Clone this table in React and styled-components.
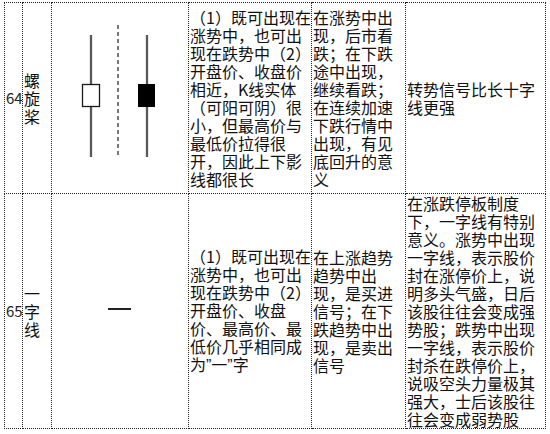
import React from "react";
import styled, { createGlobalStyle } from "styled-components";

const GlobalStyle = createGlobalStyle`
  html, body {
    margin: 0;
    padding: 0;
    background: #ffffff;
  }
  body {
    font-family: "Noto Sans CJK SC", "Noto Sans", sans-serif;
    color: #111;
  }
`;

const Page = styled.div`
  padding: 2px 0 0 4px;
  width: 550px;
  height: 434px;
  box-sizing: border-box;
`;

const Table = styled.table`
  border-collapse: collapse;
  table-layout: fixed;
  width: 541px;
  font-size: 16px;
  line-height: 18px;
`;

const Row = styled.tr`
  height: ${(p) => p.$h}px;
`;

const Cell = styled.td`
  border: 1px dotted #222;
  padding: 0;
  vertical-align: middle;
  overflow: visible;
`;

const NumCell = styled(Cell)`
  font-size: 15px;
  padding-left: 1px;
  color: #222;
`;

const NameCell = styled(Cell)`
  padding-left: 1px;
  word-break: break-all;
`;

const ChartCell = styled(Cell)`
  text-align: center;
`;

const TextCell = styled(Cell)`
  padding-left: 1px;
`;

const Line = styled.div`
  white-space: nowrap;
`;

// 中文引号按半角宽度显示
const Quote = styled.span`
  font-family: "Liberation Sans", sans-serif;
`;

const ChartSvg = styled.svg`
  display: block;
  margin: 0 auto;
`;

const FlatLine = styled.div`
  width: 23px;
  height: 2px;
  background: #222;
  margin: 0 auto;
  position: relative;
  left: -1px;
  top: -2px;
`;

const rows = [
  {
    no: "64",
    name: "螺旋桨",
    chart: "spin",
    height: 191,
    feature: [
      "（1）既可出现在",
      "涨势中，也可出",
      "现在跌势中（2）",
      "开盘价、收盘价",
      "相近，K线实体",
      "（可阳可阴）很",
      "小，但最高价与",
      "最低价拉得很",
      "开，因此上下影",
      "线都很长",
    ],
    meaning: [
      "在涨势中出",
      "现，后市看",
      "跌；在下跌",
      "途中出现，",
      "继续看跌；",
      "在连续加速",
      "下跌行情中",
      "出现，有见",
      "底回升的意",
      "义",
    ],
    notes: ["转势信号比长十字", "线更强"],
  },
  {
    no: "65",
    name: "一字线",
    chart: "flat",
    height: 233,
    feature: [
      "（1）既可出现在",
      "涨势中，也可出",
      "现在跌势中（2）",
      "开盘价、收盘",
      "价、最高价、最",
      "低价几乎相同成",
      <>
        为<Quote>”</Quote>一<Quote>”</Quote>字
      </>,
    ],
    meaning: [
      "在上涨趋势",
      "趋势中出",
      "现，是买进",
      "信号；在下",
      "跌趋势中出",
      "现，是卖出",
      "信号",
    ],
    notes: [
      "在涨跌停板制度",
      "下，一字线有特别",
      "意义。涨势中出现",
      "一字线，表示股价",
      "封在涨停价上，说",
      "明多头气盛，日后",
      "该股往往会变成强",
      "势股；跌势中出现",
      "一字线，表示股价",
      "封杀在跌停价上，",
      "说吸空头力量极其",
      "强大，士后该股往",
      "往会变成弱势股",
    ],
  },
];

function SpinningTop() {
  return (
    <ChartSvg width="136" height="190" viewBox="0 0 136 190">
      <line x1="39" y1="32" x2="39" y2="154" stroke="#cfcfcf" strokeWidth="3" />
      <line x1="39" y1="32" x2="39" y2="154" stroke="#1a1a1a" strokeWidth="1.3" />
      <rect x="30.5" y="81.5" width="17" height="22" fill="#fff" stroke="#1a1a1a" strokeWidth="1.3" />
      <line x1="66" y1="22" x2="66" y2="155" stroke="#222" strokeWidth="1.2" strokeDasharray="4 3" />
      <line x1="95" y1="32" x2="95" y2="154" stroke="#cfcfcf" strokeWidth="3" />
      <line x1="95" y1="32" x2="95" y2="154" stroke="#1a1a1a" strokeWidth="1.3" />
      <rect x="86" y="81" width="17" height="23" fill="#000" />
    </ChartSvg>
  );
}

export default function App() {
  return (
    <>
      <GlobalStyle />
      <Page>
        <Table>
          <colgroup>
            <col style={{ width: 18 }} />
            <col style={{ width: 29 }} />
            <col style={{ width: 137 }} />
            <col style={{ width: 123 }} />
            <col style={{ width: 94 }} />
            <col style={{ width: 140 }} />
          </colgroup>
          <tbody>
            {rows.map((r) => (
              <Row key={r.no} $h={r.height}>
                <NumCell>{r.no}</NumCell>
                <NameCell>{r.name}</NameCell>
                <ChartCell>
                  {r.chart === "spin" ? <SpinningTop /> : <FlatLine />}
                </ChartCell>
                <TextCell>
                  {r.feature.map((t, i) => (
                    <Line key={i}>{t}</Line>
                  ))}
                </TextCell>
                <TextCell>
                  {r.meaning.map((t, i) => (
                    <Line key={i}>{t}</Line>
                  ))}
                </TextCell>
                <TextCell>
                  {r.notes.map((t, i) => (
                    <Line key={i}>{t}</Line>
                  ))}
                </TextCell>
              </Row>
            ))}
          </tbody>
        </Table>
      </Page>
    </>
  );
}
